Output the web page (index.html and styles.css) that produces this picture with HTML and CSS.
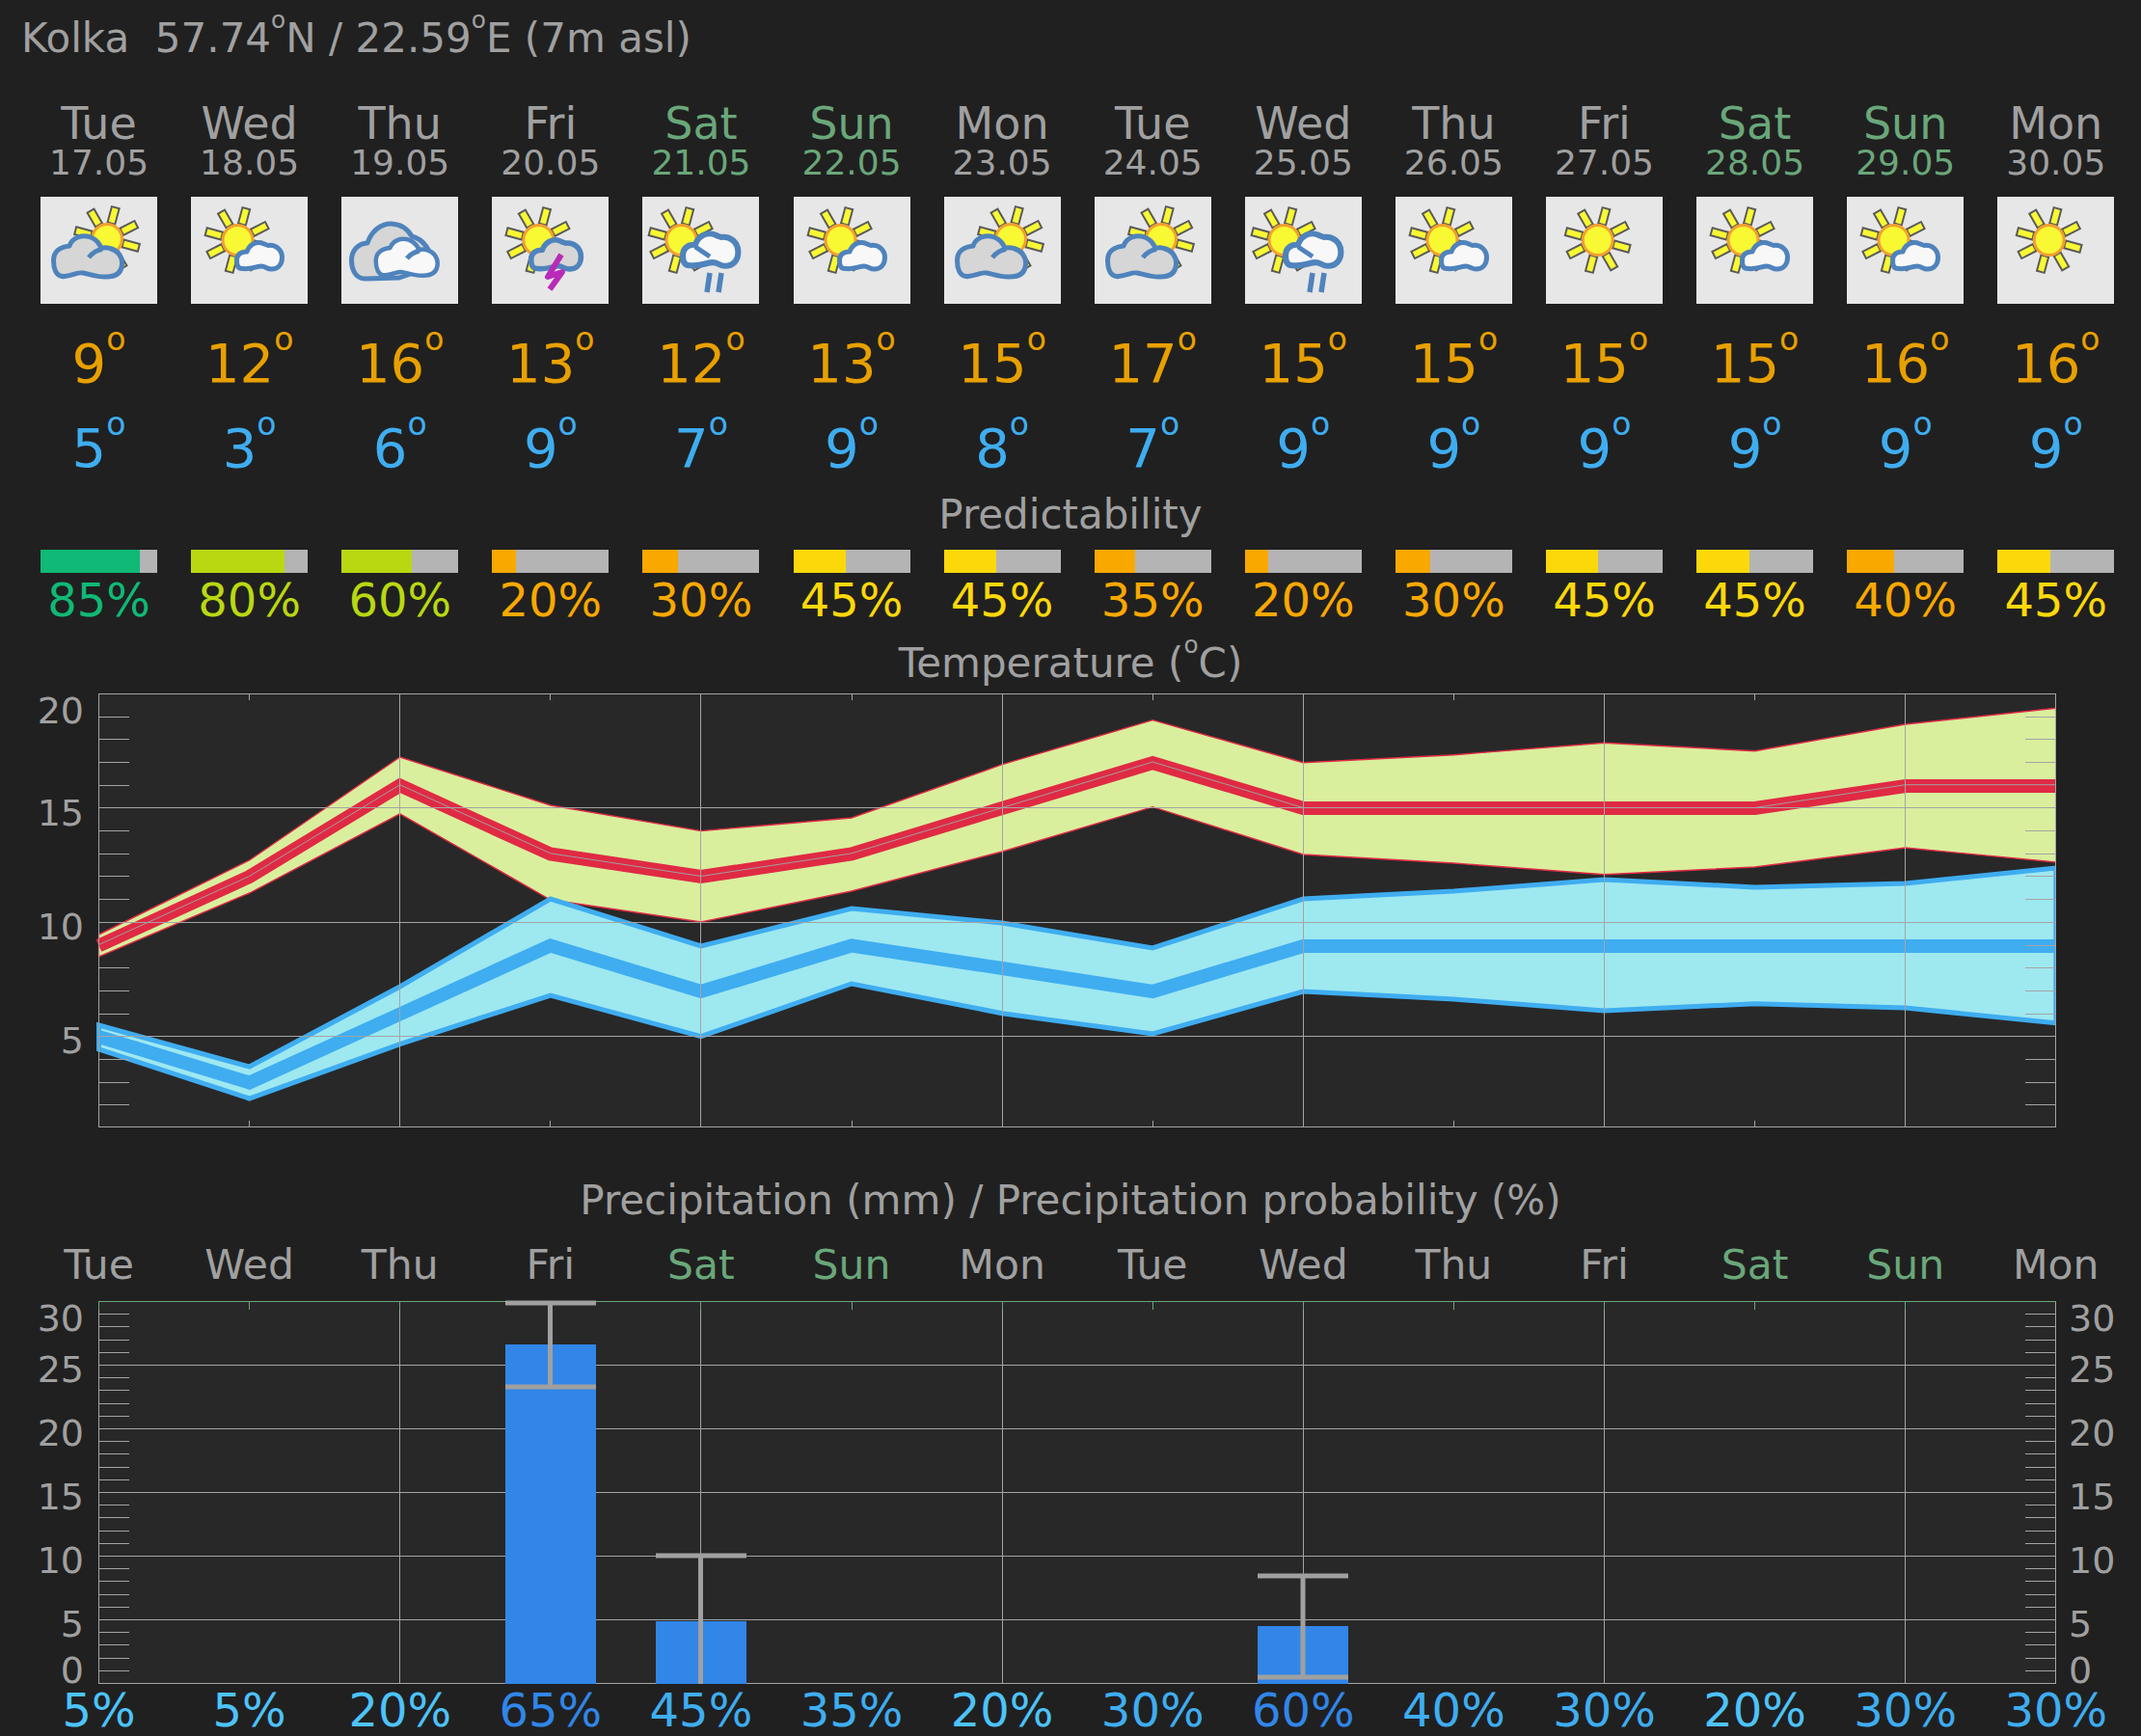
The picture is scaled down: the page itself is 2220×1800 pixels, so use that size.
FILE: index.html
```html
<!DOCTYPE html>
<html lang="en">
<head>
<meta charset="utf-8">
<title>Kolka forecast</title>
<link rel="stylesheet" href="styles.css">
</head>
<body>
<svg class="defs" aria-hidden="true">
  <defs>
    <g id="sun">
      <g class="ray">
        <rect x="-4" y="-34" width="8" height="17" transform="rotate(15)"/>
        <rect x="-4" y="-34" width="8" height="17" transform="rotate(63)"/>
        <rect x="-4" y="-34" width="8" height="17" transform="rotate(105)"/>
        <rect x="-4" y="-34" width="8" height="17" transform="rotate(150)"/>
        <rect x="-4" y="-34" width="8" height="17" transform="rotate(195)"/>
        <rect x="-4" y="-34" width="8" height="17" transform="rotate(243)"/>
        <rect x="-4" y="-34" width="8" height="17" transform="rotate(285)"/>
        <rect x="-4" y="-34" width="8" height="17" transform="rotate(330)"/>
      </g>
      <circle class="disc" r="15.500"/>
    </g>
    <path id="small-cloud" d="M54 74.500C47.500 75 47.500 69 47.500 65.500C47.500 60 52 56.500 58 57C60.500 49.500 68 45.500 75 48.500C77 49.500 78.500 50 80 50.500C88 49.500 94.500 55 94.500 63C94.500 70.500 90 75 83.500 75C78.500 75 77.500 72 73 72C68 72 62 75.500 54 74.500Z"/>
    <path id="big-cloud" d="M25 82.500C15 84 13.500 72 13.500 66C13.500 57 20 52 30 51C33 42 43 39 52 42C57 44 61 48 63 53.500C66 52.500 69 52.500 72 53.500C80 55.500 85 62 84.500 70C84 79 78 83 68 83C58 83.500 50 80 44 79C38 78 35 81.500 25 82.500Z"/>
    <g id="ic-clear"><use href="#sun" transform="translate(53.700 45)"/></g>
    <g id="ic-small">
      <use href="#sun" transform="translate(48.500 45)"/>
      <use href="#small-cloud" class="cloud white"/>
    </g>
    <g id="ic-cloudy">
      <use href="#sun" transform="translate(69 44)"/>
      <use href="#big-cloud" class="cloud grey"/>
      <path class="curl" d="M50 63C54 58 60 55 64 54.500"/>
    </g>
    <g id="ic-overcast">
      <path class="cloud grey" d="M25 85C13 85 10.500 73 10.500 66C10.500 56 17 48.500 27 48C31 36 41 27.500 52 28C62 28.500 69 34 73 41C85 44 94 56 95 72L60 84Z"/>
      <use href="#big-cloud" class="cloud white" transform="translate(23.600 7) scale(.9)"/>
      <path class="curl" d="M68 64C71 60 77 57 81 56"/>
    </g>
    <g id="ic-thunder">
      <use href="#sun" transform="translate(48.300 45)"/>
      <use href="#small-cloud" class="cloud grey" transform="translate(-11.500 -7.400) scale(1.100)"/>
      <polyline class="bolt" points="72,60 58,83 73,78 60,96"/>
    </g>
    <g id="ic-rain">
      <use href="#sun" transform="translate(40.500 45)"/>
      <use href="#small-cloud" class="cloud white" transform="translate(-15.900 -19.700) scale(1.220)"/>
      <path class="curl" d="M55 52L70 62"/>
      <path class="drops" d="M70 79L67 99M82 79L79 99"/>
    </g>
  </defs>
</svg>

<main class="page">
  <h1 class="location">Kolka&nbsp; 57.74<span class="deg">o</span>N / 22.59<span class="deg">o</span>E (7m asl)</h1>

  <section class="cols forecast">
    <div class="day"><div class="name">Tue</div><div class="date">17.05</div><svg class="icon" viewBox="0 0 121 111"><use href="#ic-cloudy"/></svg><div class="tmax">9<span class="deg">o</span></div><div class="tmin">5<span class="deg">o</span></div></div>
    <div class="day"><div class="name">Wed</div><div class="date">18.05</div><svg class="icon" viewBox="0 0 121 111"><use href="#ic-small"/></svg><div class="tmax">12<span class="deg">o</span></div><div class="tmin">3<span class="deg">o</span></div></div>
    <div class="day"><div class="name">Thu</div><div class="date">19.05</div><svg class="icon" viewBox="0 0 121 111"><use href="#ic-overcast"/></svg><div class="tmax">16<span class="deg">o</span></div><div class="tmin">6<span class="deg">o</span></div></div>
    <div class="day"><div class="name">Fri</div><div class="date">20.05</div><svg class="icon" viewBox="0 0 121 111"><use href="#ic-thunder"/></svg><div class="tmax">13<span class="deg">o</span></div><div class="tmin">9<span class="deg">o</span></div></div>
    <div class="day weekend"><div class="name">Sat</div><div class="date">21.05</div><svg class="icon" viewBox="0 0 121 111"><use href="#ic-rain"/></svg><div class="tmax">12<span class="deg">o</span></div><div class="tmin">7<span class="deg">o</span></div></div>
    <div class="day weekend"><div class="name">Sun</div><div class="date">22.05</div><svg class="icon" viewBox="0 0 121 111"><use href="#ic-small"/></svg><div class="tmax">13<span class="deg">o</span></div><div class="tmin">9<span class="deg">o</span></div></div>
    <div class="day"><div class="name">Mon</div><div class="date">23.05</div><svg class="icon" viewBox="0 0 121 111"><use href="#ic-cloudy"/></svg><div class="tmax">15<span class="deg">o</span></div><div class="tmin">8<span class="deg">o</span></div></div>
    <div class="day"><div class="name">Tue</div><div class="date">24.05</div><svg class="icon" viewBox="0 0 121 111"><use href="#ic-cloudy"/></svg><div class="tmax">17<span class="deg">o</span></div><div class="tmin">7<span class="deg">o</span></div></div>
    <div class="day"><div class="name">Wed</div><div class="date">25.05</div><svg class="icon" viewBox="0 0 121 111"><use href="#ic-rain"/></svg><div class="tmax">15<span class="deg">o</span></div><div class="tmin">9<span class="deg">o</span></div></div>
    <div class="day"><div class="name">Thu</div><div class="date">26.05</div><svg class="icon" viewBox="0 0 121 111"><use href="#ic-small"/></svg><div class="tmax">15<span class="deg">o</span></div><div class="tmin">9<span class="deg">o</span></div></div>
    <div class="day"><div class="name">Fri</div><div class="date">27.05</div><svg class="icon" viewBox="0 0 121 111"><use href="#ic-clear"/></svg><div class="tmax">15<span class="deg">o</span></div><div class="tmin">9<span class="deg">o</span></div></div>
    <div class="day weekend"><div class="name">Sat</div><div class="date">28.05</div><svg class="icon" viewBox="0 0 121 111"><use href="#ic-small"/></svg><div class="tmax">15<span class="deg">o</span></div><div class="tmin">9<span class="deg">o</span></div></div>
    <div class="day weekend"><div class="name">Sun</div><div class="date">29.05</div><svg class="icon" viewBox="0 0 121 111"><use href="#ic-small"/></svg><div class="tmax">16<span class="deg">o</span></div><div class="tmin">9<span class="deg">o</span></div></div>
    <div class="day"><div class="name">Mon</div><div class="date">30.05</div><svg class="icon" viewBox="0 0 121 111"><use href="#ic-clear"/></svg><div class="tmax">16<span class="deg">o</span></div><div class="tmin">9<span class="deg">o</span></div></div>
  </section>

  <h2 class="heading pred-heading">Predictability</h2>
  <section class="cols predict">
    <div class="pred high"><div class="track"><div class="fill" style="width:85%"></div></div><div class="pct">85%</div></div>
    <div class="pred good"><div class="track"><div class="fill" style="width:80%"></div></div><div class="pct">80%</div></div>
    <div class="pred good"><div class="track"><div class="fill" style="width:60%"></div></div><div class="pct">60%</div></div>
    <div class="pred low"><div class="track"><div class="fill" style="width:20%"></div></div><div class="pct">20%</div></div>
    <div class="pred low"><div class="track"><div class="fill" style="width:30%"></div></div><div class="pct">30%</div></div>
    <div class="pred mid"><div class="track"><div class="fill" style="width:45%"></div></div><div class="pct">45%</div></div>
    <div class="pred mid"><div class="track"><div class="fill" style="width:45%"></div></div><div class="pct">45%</div></div>
    <div class="pred low"><div class="track"><div class="fill" style="width:35%"></div></div><div class="pct">35%</div></div>
    <div class="pred low"><div class="track"><div class="fill" style="width:20%"></div></div><div class="pct">20%</div></div>
    <div class="pred low"><div class="track"><div class="fill" style="width:30%"></div></div><div class="pct">30%</div></div>
    <div class="pred mid"><div class="track"><div class="fill" style="width:45%"></div></div><div class="pct">45%</div></div>
    <div class="pred mid"><div class="track"><div class="fill" style="width:45%"></div></div><div class="pct">45%</div></div>
    <div class="pred low"><div class="track"><div class="fill" style="width:40%"></div></div><div class="pct">40%</div></div>
    <div class="pred mid"><div class="track"><div class="fill" style="width:45%"></div></div><div class="pct">45%</div></div>
  </section>

  <h2 class="heading temp-heading">Temperature (<span class="deg">o</span>C)</h2>
  <svg class="chart temp-chart" viewBox="0 714 2220 466">
    <defs><clipPath id="plot1"><rect x="98" y="719" width="2033.500" height="450"/></clipPath></defs>
    <rect class="plot-bg" x="102.500" y="719" width="2029" height="450"/>
    <g clip-path="url(#plot1)">
      <polygon class="band-red" points="102.500,969 258.600,892 414.700,785 570.800,835 726.900,861.600 883,848 1039.100,792.700 1195.200,746.700 1351.300,790.700 1507.400,782.700 1663.500,770.300 1819.600,778.700 1975.700,751 2131.800,734.300 2131.800,894 1975.700,879 1819.600,899 1663.500,906.700 1507.400,895 1351.300,886 1195.200,836.700 1039.100,883 883,924 726.900,956 570.800,933 414.700,843.800 258.600,926 102.500,992"/>
      <polygon class="band-blue" points="102.500,1063 258.600,1106 414.700,1023 570.800,932 726.900,981 883,942 1039.100,957 1195.200,983 1351.300,932 1507.400,924 1663.500,912 1819.600,920 1975.700,916 2131.800,900 2131.800,1060.700 1975.700,1045 1819.600,1040.700 1663.500,1048 1507.400,1036 1351.300,1028 1195.200,1072 1039.100,1050.700 883,1020 726.900,1074.700 570.800,1032 414.700,1082.600 258.600,1139 102.500,1088"/>
      <polyline class="line-red" points="102.500,980.500 258.600,909 414.700,814.500 570.800,885.500 726.900,909 883,885.500 1039.100,838 1195.200,791 1351.300,838 1507.400,838 1663.500,838 1819.600,838 1975.700,815 2131.800,815"/>
      <polyline class="line-blue" points="102.500,1075 258.600,1122.500 414.700,1051.500 570.800,980.500 726.900,1028 883,980.500 1039.100,1004 1195.200,1028 1351.300,981 1507.400,981 1663.500,981 1819.600,981 1975.700,981 2131.800,981"/>
      <polyline class="line-mean" points="102.500,979.500 258.600,908.500 414.700,813.700 570.800,884.800 726.900,908.500 883,884.800 1039.100,837.500 1195.200,790 1351.300,837.500"/>
      <polyline class="line-mean" points="1819.600,837.500 1975.700,813.700 2131.800,813.700"/>
    </g>
    <path class="grid" d="M414.500 719V1169M726.500 719V1169M1039.500 719V1169M1351.500 719V1169M1663.500 719V1169M1975.500 719V1169"/>
    <path class="grid" d="M102 837.500H2132M102 956.500H2132M102 1074.500H2132"/>
    <path class="grid" d="M258.500 719v7M570.500 719v7M883.500 719v7M1195.500 719v7M1507.500 719v7M1819.500 719v7M258.500 1169v-7M570.500 1169v-7M883.500 1169v-7M1195.500 1169v-7M1507.500 1169v-7M1819.500 1169v-7"/>
    <path class="grid" d="M102 743.500h32M102 766.500h32M102 790.500h32M102 814.500h32M102 861.500h32M102 885.500h32M102 908.500h32M102 932.500h32M102 1003.500h32M102 1027.500h32M102 1051.500h32M102 1098.500h32M102 1122.500h32M102 1145.500h32M2100 743.500h32M2100 766.500h32M2100 790.500h32M2100 861.500h32M2100 885.500h32M2100 908.500h32M2100 932.500h32M2100 980.500h32M2100 1003.500h32M2100 1027.500h32M2100 1051.500h32M2100 1098.500h32M2100 1122.500h32M2100 1145.500h32"/>
    <rect class="frame" x="102.500" y="719.500" width="2029" height="449"/>
    <text class="axis" x="87" y="750">20</text>
    <text class="axis" x="87" y="856">15</text>
    <text class="axis" x="87" y="974">10</text>
    <text class="axis" x="87" y="1091.500">5</text>
  </svg>

  <h2 class="heading rain-heading">Precipitation (mm) / Precipitation probability (%)</h2>
  <section class="cols weekdays">
    <div>Tue</div><div>Wed</div><div>Thu</div><div>Fri</div><div class="weekend">Sat</div><div class="weekend">Sun</div><div>Mon</div><div>Tue</div><div>Wed</div><div>Thu</div><div>Fri</div><div class="weekend">Sat</div><div class="weekend">Sun</div><div>Mon</div>
  </section>
  <svg class="chart rain-chart" viewBox="0 1340 2220 408">
    <rect class="plot-bg" x="102.500" y="1349" width="2029" height="396"/>
    <path class="grid" d="M414.500 1349V1745M726.500 1349V1745M1039.500 1349V1745M1351.500 1349V1745M1663.500 1349V1745M1975.500 1349V1745"/>
    <path class="grid" d="M102 1415.500H2132M102 1481.500H2132M102 1547.500H2132M102 1613.500H2132M102 1679.500H2132"/>
    <path class="grid" d="M102 1362.500h32M102 1375.500h32M102 1389.500h32M102 1402.500h32M102 1428.500h32M102 1441.500h32M102 1455.500h32M102 1468.500h32M102 1494.500h32M102 1507.500h32M102 1521.500h32M102 1534.500h32M102 1560.500h32M102 1573.500h32M102 1587.500h32M102 1600.500h32M102 1626.500h32M102 1639.500h32M102 1653.500h32M102 1666.500h32M102 1692.500h32M102 1705.500h32M102 1719.500h32M102 1732.500h32M2100 1362.500h32M2100 1375.500h32M2100 1389.500h32M2100 1402.500h32M2100 1428.500h32M2100 1441.500h32M2100 1455.500h32M2100 1468.500h32M2100 1494.500h32M2100 1507.500h32M2100 1521.500h32M2100 1534.500h32M2100 1560.500h32M2100 1573.500h32M2100 1587.500h32M2100 1600.500h32M2100 1626.500h32M2100 1639.500h32M2100 1653.500h32M2100 1666.500h32M2100 1692.500h32M2100 1705.500h32M2100 1719.500h32M2100 1732.500h32"/>
    <rect class="frame" x="102.500" y="1349.500" width="2029" height="396"/>
    <path class="topline" d="M102 1349.500H2132M102.500 1349v9M258.500 1349v9M414.500 1349v9M570.500 1349v9M726.500 1349v9M883.500 1349v9M1039.500 1349v9M1195.500 1349v9M1351.500 1349v9M1507.500 1349v9M1663.500 1349v9M1819.500 1349v9M1975.500 1349v9"/>
    <rect class="bar" x="524" y="1394" width="94" height="352"/>
    <rect class="bar" x="680" y="1681" width="94" height="65"/>
    <rect class="bar" x="1304" y="1686" width="94" height="60"/>
    <path class="err" d="M524 1351H618M570.500 1351V1438M524 1438H618M680 1613H774M726.500 1613V1746M1304 1634H1398M1351 1634V1739M1304 1739H1398"/>
    <text class="axis" x="87" y="1380">30</text>
    <text class="axis" x="87" y="1433">25</text>
    <text class="axis" x="87" y="1499">20</text>
    <text class="axis" x="87" y="1565">15</text>
    <text class="axis" x="87" y="1631">10</text>
    <text class="axis" x="87" y="1697">5</text>
    <text class="axis" x="87" y="1745">0</text>
    <text class="axis right" x="2145" y="1380">30</text>
    <text class="axis right" x="2145" y="1433">25</text>
    <text class="axis right" x="2145" y="1499">20</text>
    <text class="axis right" x="2145" y="1565">15</text>
    <text class="axis right" x="2145" y="1631">10</text>
    <text class="axis right" x="2145" y="1697">5</text>
    <text class="axis right" x="2145" y="1745">0</text>
  </svg>
  <section class="cols probs">
    <div class="p-light">5%</div><div class="p-light">5%</div><div class="p-light">20%</div><div class="p-deep">65%</div><div class="p-mid">45%</div><div class="p-mid">35%</div><div class="p-light">20%</div><div class="p-mid">30%</div><div class="p-deep">60%</div><div class="p-mid">40%</div><div class="p-mid">30%</div><div class="p-light">20%</div><div class="p-mid">30%</div><div class="p-mid">30%</div>
  </section>
</main>
</body>
</html>
```

FILE: styles.css
```css
* { box-sizing: border-box; }

html, body {
  margin: 0;
  height: 1800px;
  overflow: hidden;
  background: #202020;
}

body {
  font-family: "DejaVu Sans", sans-serif;
  color: #a0a0a0;
}

.defs { position: absolute; width: 0; height: 0; }

.page { width: 2220px; padding-top: 10px; }

.deg {
  font-size: .59em;
  line-height: 0;
  vertical-align: 1em;
}

.location {
  margin: 0 0 0 22px;
  font-size: 42px;
  font-weight: 400;
  line-height: 60px;
}

.cols {
  display: grid;
  grid-template-columns: repeat(14, 156.1px);
  margin-left: 24.5px;
  text-align: center;
}

.forecast { margin-top: 36px; }

.day { display: flex; flex-direction: column; align-items: center; }

.name { font-size: 46px; line-height: 45px; }
.date { font-size: 36px; line-height: 35px; }
.weekend { color: #6aa77a; }

.icon {
  display: block;
  width: 121px;
  height: 111px;
  margin-top: 18px;
  background: #e7e7e7;
}

.ray rect { fill: #f8f833; stroke: #5a5a5a; stroke-width: 2; }
.disc { fill: #f8f833; stroke: #f2a02e; stroke-width: 3; }
.cloud { stroke: #4f83bc; stroke-width: 5; stroke-linejoin: round; }
.cloud.white { fill: #f8f8f8; }
.cloud.grey { fill: #d6d6d6; }
.curl { fill: none; stroke: #4f83bc; stroke-width: 5; }
.drops { fill: none; stroke: #4f83bc; stroke-width: 5.500; }
.bolt {
  fill: none;
  stroke: #b92ab8;
  stroke-width: 6;
  stroke-linejoin: round;
}

.tmax, .tmin { font-size: 56px; line-height: 60px; }
.tmax { color: #e8a000; margin-top: 32px; }
.tmin { color: #3fadf0; margin-top: 28px; }

.heading {
  margin: 0;
  font-size: 42px;
  font-weight: 400;
  line-height: 50px;
  text-align: center;
}

.pred-heading { margin-top: 14px; }
.temp-heading { margin-top: 15px; }
.rain-heading { margin-top: 40px; }

.predict { margin-top: 11px; }

.pred { display: flex; flex-direction: column; align-items: center; }

.track {
  width: 121px;
  height: 24px;
  background: #b4b4b4;
}

.fill { height: 100%; }

.pct { margin-top: 3px; font-size: 48px; line-height: 51px; }

.high .fill { background: #10b976; }
.high .pct { color: #10b976; }
.good .fill { background: #b9d812; }
.good .pct { color: #b9d812; }
.mid .fill { background: #fcd80a; }
.mid .pct { color: #fcd80a; }
.low .fill { background: #f9a800; }
.low .pct { color: #f9a800; }

.chart { display: block; width: 2220px; overflow: visible; }
.temp-chart { height: 466px; margin-top: 1px; }
.rain-chart { height: 408px; margin-top: 6px; }

.plot-bg { fill: #282828; }

.band-red { fill: #d9ef9e; stroke: #e22a45; stroke-width: 1.400; }
.band-blue { fill: #9ee8f0; stroke: #3fadf0; stroke-width: 5; }
.line-red { fill: none; stroke: #e02a44; stroke-width: 14; }
.line-blue { fill: none; stroke: #3fadf0; stroke-width: 14; }
.line-mean { fill: none; stroke: #a0a0a0; stroke-width: 1; }

.grid { fill: none; stroke: #a4a4a4; stroke-width: 1; shape-rendering: crispEdges; }
.frame { fill: none; stroke: #a4a4a4; stroke-width: 1; shape-rendering: crispEdges; }
.topline { fill: none; stroke: #6aa77a; stroke-width: 1; shape-rendering: crispEdges; }

.axis { font-size: 38px; fill: #a0a0a0; text-anchor: end; }
.axis.right { text-anchor: start; }

.bar { fill: #3186e8; }
.err { fill: none; stroke: #a0a0a0; stroke-width: 5; }

.weekdays { margin-top: 20px; font-size: 42.500px; line-height: 44px; }

.probs { font-size: 48px; line-height: 50px; }
.p-light { color: #4dc3fa; }
.p-mid { color: #3fadf0; }
.p-deep { color: #3186e8; }
```
